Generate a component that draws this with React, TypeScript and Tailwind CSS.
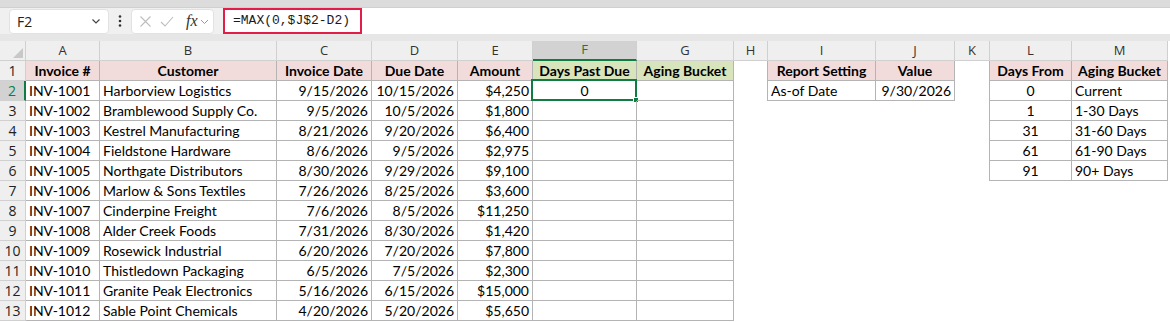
import React from 'react';

type Cell = { text?: string; align?: 'left' | 'center' | 'right'; bold?: boolean; bg?: string };

const COLS = ['A', 'B', 'C', 'D', 'E', 'F', 'G', 'H', 'I', 'J', 'K', 'L', 'M'];

const invoices: string[][] = [
  ['INV-1001', 'Harborview Logistics', '9/15/2026', '10/15/2026', '$4,250'],
  ['INV-1002', 'Bramblewood Supply Co.', '9/5/2026', '10/5/2026', '$1,800'],
  ['INV-1003', 'Kestrel Manufacturing', '8/21/2026', '9/20/2026', '$6,400'],
  ['INV-1004', 'Fieldstone Hardware', '8/6/2026', '9/5/2026', '$2,975'],
  ['INV-1005', 'Northgate Distributors', '8/30/2026', '9/29/2026', '$9,100'],
  ['INV-1006', 'Marlow & Sons Textiles', '7/26/2026', '8/25/2026', '$3,600'],
  ['INV-1007', 'Cinderpine Freight', '7/6/2026', '8/5/2026', '$11,250'],
  ['INV-1008', 'Alder Creek Foods', '7/31/2026', '8/30/2026', '$1,420'],
  ['INV-1009', 'Rosewick Industrial', '6/20/2026', '7/20/2026', '$7,800'],
  ['INV-1010', 'Thistledown Packaging', '6/5/2026', '7/5/2026', '$2,300'],
  ['INV-1011', 'Granite Peak Electronics', '5/16/2026', '6/15/2026', '$15,000'],
  ['INV-1012', 'Sable Point Chemicals', '4/20/2026', '5/20/2026', '$5,650'],
];

const buckets: [string, string][] = [
  ['0', 'Current'],
  ['1', '1-30 Days'],
  ['31', '31-60 Days'],
  ['61', '61-90 Days'],
  ['91', '90+ Days'],
];

const PINK = 'bg-[#f2dcdb]';
const GREEN = 'bg-[#d8e4bc]';

// build the sheet: 13 rows x 13 columns (A..M)
const buildSheet = (): Cell[][] => {
  const sheet: Cell[][] = Array.from({ length: 13 }, () => Array.from({ length: 13 }, () => ({} as Cell)));
  const head = ['Invoice #', 'Customer', 'Invoice Date', 'Due Date', 'Amount', 'Days Past Due', 'Aging Bucket'];
  head.forEach((h, i) => {
    sheet[0][i] = { text: h, align: 'center', bold: true, bg: i >= 5 ? GREEN : PINK };
  });
  sheet[0][8] = { text: 'Report Setting', align: 'center', bold: true, bg: PINK };
  sheet[0][9] = { text: 'Value', align: 'center', bold: true, bg: PINK };
  sheet[0][11] = { text: 'Days From', align: 'center', bold: true, bg: PINK };
  sheet[0][12] = { text: 'Aging Bucket', align: 'center', bold: true, bg: PINK };

  invoices.forEach((row, r) => {
    sheet[r + 1][0] = { text: row[0], align: 'left' };
    sheet[r + 1][1] = { text: row[1], align: 'left' };
    sheet[r + 1][2] = { text: row[2], align: 'right' };
    sheet[r + 1][3] = { text: row[3], align: 'right' };
    sheet[r + 1][4] = { text: row[4], align: 'right' };
  });
  sheet[1][5] = { text: '0', align: 'center' };
  sheet[1][8] = { text: 'As-of Date', align: 'left' };
  sheet[1][9] = { text: '9/30/2026', align: 'right' };
  buckets.forEach(([from, label], i) => {
    sheet[i + 1][11] = { text: from, align: 'center' };
    sheet[i + 1][12] = { text: label, align: 'left' };
  });
  return sheet;
};

const inTable = (r: number, c: number) =>
  (c <= 6 && r <= 12) || ((c === 8 || c === 9) && r <= 1) || ((c === 11 || c === 12) && r <= 5);

const gridCols = 'grid grid-cols-[26px_74px_177px_95px_86px_75px_104px_97px_34px_108px_79px_35px_82px_96px]';

const FormulaBar: React.FC = () => (
  <div className="bg-[#f0f0f0]">
    <div className="h-[8px] bg-[#dcdcdc] border-b border-[#d0d0d0]" />
    <div className="flex items-center h-[26px]">
      <div className="ml-[9px] w-[100px] h-[25px] bg-white rounded-[4px] border border-[#e2e2e2] flex items-center justify-between pl-[7px] pr-[6px]">
        <span className="text-[14px] text-[#222]" style={{ fontFamily: '"Open Sans", sans-serif' }}>F2</span>
        <svg width="12" height="12" viewBox="0 0 12 12"><path d="M2.5 4.5 L6 8 L9.5 4.5" fill="none" stroke="#444" strokeWidth="1.2" /></svg>
      </div>
      <div className="w-[22px] flex justify-center">
        <svg width="4" height="14" viewBox="0 0 4 14"><circle cx="2" cy="2.5" r="1.3" fill="#333" /><circle cx="2" cy="7" r="1.3" fill="#333" /><circle cx="2" cy="11.5" r="1.3" fill="#333" /></svg>
      </div>
      <div className="w-[83px] h-[25px] bg-white rounded-[4px] border border-[#e2e2e2] flex items-center pl-[7px] gap-[8px]">
        <svg width="13" height="13" viewBox="0 0 13 13"><path d="M1.5 1.5 L11.5 11.5 M11.5 1.5 L1.5 11.5" stroke="#bdbdbd" strokeWidth="1.1" /></svg>
        <svg width="14" height="13" viewBox="0 0 14 13"><path d="M1 7 L5 11 L13 2" fill="none" stroke="#bdbdbd" strokeWidth="1.1" /></svg>
        <span className="text-[16px] italic text-[#333] leading-none ml-[4px]" style={{ fontFamily: '"Liberation Serif", serif' }}>fx</span>
        <svg width="9" height="9" viewBox="0 0 9 9" className="-ml-[6px]"><path d="M1 3 L4.5 6.5 L8 3" fill="none" stroke="#999" strokeWidth="1" /></svg>
      </div>
      <div className="ml-[9px] flex-1 h-[26px] bg-white flex items-center">
        <div className="h-[26px] w-[139px] border-[2.5px] border-[#e11d48] flex items-center pl-[8px]">
          <span className="text-[13px] text-[#1a1a1a]" style={{ fontFamily: '"Liberation Mono", monospace' }}>=MAX(0,$J$2-D2)</span>
        </div>
      </div>
    </div>
    <div className="h-[7px] bg-[#e6e6e6]" />
  </div>
);

const App: React.FC = () => {
  const sheet = buildSheet();

  return (
    <div className="w-[1170px] h-[322px] overflow-hidden bg-white" style={{ fontFamily: 'Lato, "Liberation Sans", sans-serif' }}>
      <FormulaBar />

      <div className={gridCols}>
        {/* corner */}
        <div className="h-[20px] bg-[#efefef] border-r border-b border-[#d0d0d0] flex items-end justify-end p-[2px]">
          <svg width="10" height="10" viewBox="0 0 10 10"><path d="M10 0 L10 10 L0 10 Z" fill="#c8c8c8" /></svg>
        </div>
        {COLS.map((c) =>
          c === 'F' ? (
            <div key={c} className="h-[20px] bg-[#d2d2d2] border-r border-[#d0d0d0] border-b-2 border-b-[#107c41] flex items-center justify-center text-[13px] text-[#107c41]" style={{ fontFamily: '"Open Sans", sans-serif' }}>
              {c}
            </div>
          ) : (
            <div key={c} className="h-[20px] bg-[#efefef] border-r border-b border-[#d0d0d0] flex items-center justify-center text-[13px] text-[#333]" style={{ fontFamily: '"Open Sans", sans-serif' }}>
              {c}
            </div>
          )
        )}

        {sheet.map((row, r) => (
          <React.Fragment key={r}>
            {r === 1 ? (
              <div className="h-[20px] bg-[#d2d2d2] border-b border-[#d0d0d0] border-r-2 border-r-[#107c41] flex items-center justify-center text-[14px] text-[#107c41]" style={{ fontFamily: '"Open Sans", sans-serif' }}>
                {r + 1}
              </div>
            ) : (
              <div className="h-[20px] bg-[#efefef] border-r border-b border-[#d0d0d0] flex items-center justify-center text-[14px] text-[#222]" style={{ fontFamily: '"Open Sans", sans-serif' }}>
                {r + 1}
              </div>
            )}
            {row.map((cell, c) => {
              const right = inTable(r, c) || inTable(r, c + 1);
              const bottom = inTable(r, c);
              const justify = cell.align === 'right' ? 'justify-end' : cell.align === 'center' ? 'justify-center' : 'justify-start';
              return (
                <div
                  key={c}
                  className={[
                    'relative h-[20px] flex items-center px-[3px] text-[14px] text-black whitespace-nowrap',
                    justify,
                    cell.bold ? 'font-bold' : '',
                    cell.bg ?? '',
                    right ? 'border-r border-r-[#b4b4b4]' : '',
                    bottom ? 'border-b border-b-[#b4b4b4]' : '',
                  ].join(' ')}
                >
                  {cell.text}
                  {r === 1 && c === 5 && (
                    <>
                      <div className="absolute -left-[2px] -top-[2px] -right-[1px] -bottom-[1px] border-2 border-[#107c41]" />
                      <div className="absolute -right-[3px] -bottom-[3px] w-[6px] h-[6px] bg-[#107c41] border border-white" />
                    </>
                  )}
                </div>
              );
            })}
          </React.Fragment>
        ))}
      </div>
    </div>
  );
};

export default App;
